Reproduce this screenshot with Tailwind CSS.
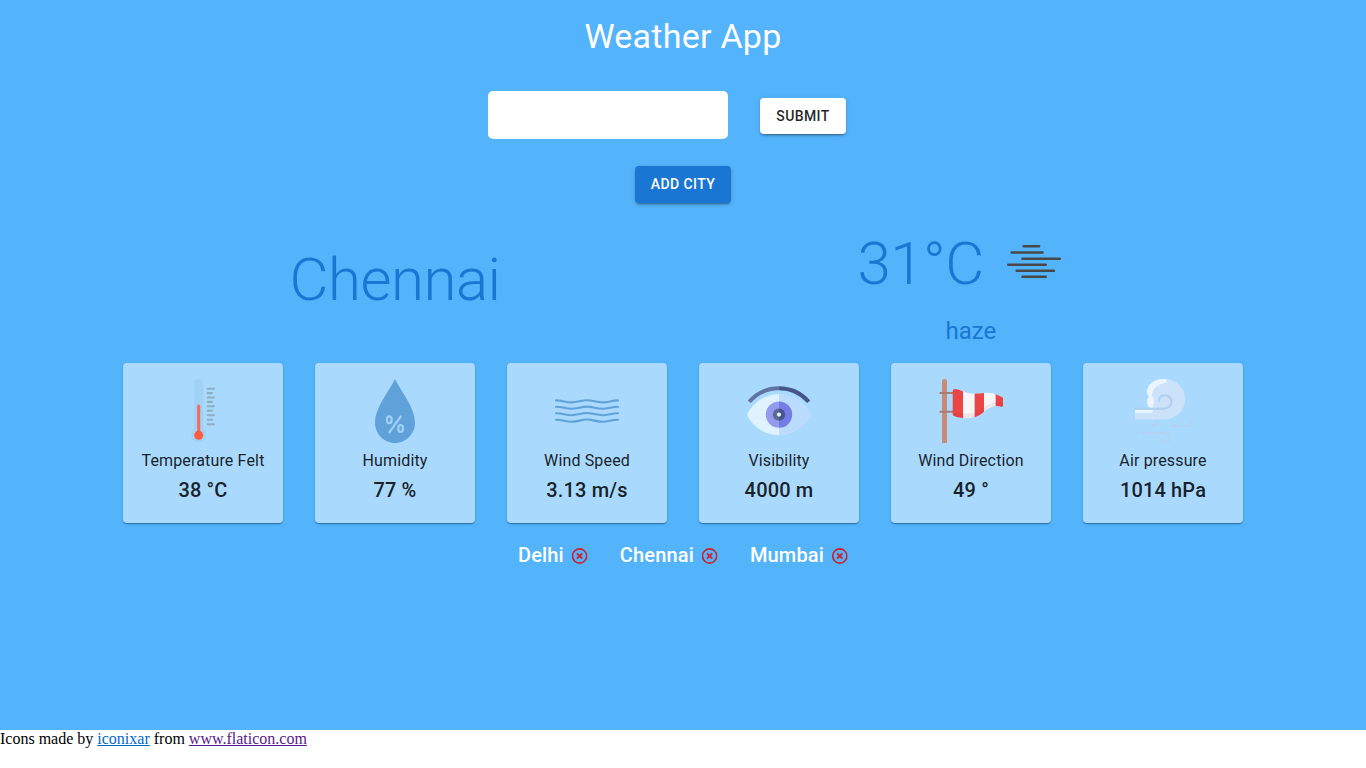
<!DOCTYPE html>
<html lang="en">
<head>
<meta charset="utf-8">
<title>Weather App</title>
<script src="https://cdn.jsdelivr.net/npm/@tailwindcss/browser@4"></script>
</head>
<body class="bg-white overflow-hidden">
<svg class="hidden">
  <symbol id="remove" viewBox="0 0 16 16">
    <circle cx="8" cy="8" r="7.1" fill="none" stroke="#cf1f2e" stroke-width="1.6"/>
    <path d="M5.3 5.3l5.4 5.4M10.7 5.3l-5.4 5.4" stroke="#cf1f2e" stroke-width="1.9"/>
  </symbol>
</svg>
<main class="h-[730px] bg-[#53b3fb] font-['Roboto',sans-serif] pt-[15px] text-[rgba(0,0,0,0.87)]">
  <h1 class="text-center text-white text-[34px] leading-[42px] tracking-[0.00735em]">Weather App</h1>
  <form class="mt-[34px] flex justify-center gap-8 pr-8">
    <input class="w-60 h-12 bg-white rounded-[5px] outline-none" type="text" aria-label="City">
    <button type="button" class="mt-[7px] h-9 px-4 bg-white rounded text-sm font-medium tracking-[0.02857em] shadow-[0_3px_1px_-2px_rgba(0,0,0,0.2),0_2px_2px_0_rgba(0,0,0,0.14),0_1px_5px_0_rgba(0,0,0,0.12)]">SUBMIT</button>
  </form>
  <div class="mt-[27px] flex justify-center">
    <button type="button" class="h-[37px] px-4 pb-[2px] bg-[#1976d2] text-white rounded text-sm font-medium tracking-[0.02857em] shadow-[0_3px_1px_-2px_rgba(0,0,0,0.2),0_2px_2px_0_rgba(0,0,0,0.14),0_1px_5px_0_rgba(0,0,0,0.12)]">ADD CITY</button>
  </div>
  <section class="mt-6 mx-auto w-[1152px] grid grid-cols-2 text-[#1976d2]">
    <h2 class="pt-[17px] text-center text-6xl leading-[72px] font-light tracking-[-0.00833em]">Chennai</h2>
    <div class="h-[120px]">
      <div class="flex pl-[174.5px] pt-px">
        <span class="w-[126px] whitespace-nowrap text-6xl leading-[72px] font-light tracking-[-0.00833em]">31°C</span>
        <svg class="ml-[14.5px]" width="72" height="72" viewBox="998 228 72 72" fill="none" stroke="#48484a" stroke-width="2.6" stroke-linecap="round"><path d="M1023.7 246.3h15.4M1011.7 252.5h30.8M1022.5 258.7h37.3M1008.3 264.7h37.5M1016.7 270.7h37.2M1022.5 276.7h23.3"/></svg>
      </div>
      <p class="mt-[15px] pl-[262.5px] text-2xl leading-8">haze</p>
    </div>
  </section>
  <section class="mt-4 flex justify-center gap-8 text-center">
    <article class="size-40 pt-4 rounded bg-[#a9d9fd] shadow-[0_2px_1px_-1px_rgba(0,0,0,0.2),0_1px_1px_0_rgba(0,0,0,0.14),0_1px_3px_0_rgba(0,0,0,0.12)]">
      <svg class="mx-auto size-16" viewBox="0 0 64 64">
        <path d="M23.2 4.5a4.5 4.5 0 0 1 9 0V50a7.5 7.5 0 1 1-9 0Z" fill="#a0d2f6"/>
        <path d="M27.7 27v27" stroke="#f3695d" stroke-width="3" stroke-linecap="round"/>
        <circle cx="27.7" cy="56.3" r="4.5" fill="#ff5b40"/>
        <path d="M36.7 9.7h6.3M36.7 18.5h6.3M36.7 27.3h6.3M36.7 36.3h6.3M36.7 45.2h6.3M36.7 14.1h4.3M36.7 22.9h4.3M36.7 31.8h4.3M36.7 40.7h4.3" stroke="#8eafbf" stroke-width="2.1" stroke-linecap="round"/>
      </svg>
      <p class="mt-[6px] leading-6 tracking-[0.00938em]">Temperature Felt</p>
      <p class="mt-px text-xl leading-8 font-medium tracking-[0.0075em]">38 °C</p>
    </article>
    <article class="size-40 pt-4 rounded bg-[#a9d9fd] shadow-[0_2px_1px_-1px_rgba(0,0,0,0.2),0_1px_1px_0_rgba(0,0,0,0.14),0_1px_3px_0_rgba(0,0,0,0.12)]">
      <svg class="mx-auto size-16" viewBox="0 0 64 64">
        <path d="M32 0C25 14 12 29 12 43.5C12 55 21 64 32 64s20-9 20-20.5C52 29 39 14 32 0Z" fill="#61a1d9"/>
        <g fill="none" stroke="#9fd2fb" stroke-width="2.2" stroke-linecap="round"><ellipse cx="26.3" cy="40.7" rx="2.4" ry="3.4"/><ellipse cx="37.6" cy="49.4" rx="2.4" ry="3.4"/><path d="M26.4 53.3L37.8 37.3"/></g>
      </svg>
      <p class="mt-[6px] leading-6 tracking-[0.00938em]">Humidity</p>
      <p class="mt-px text-xl leading-8 font-medium tracking-[0.0075em]">77 %</p>
    </article>
    <article class="size-40 pt-4 rounded bg-[#a9d9fd] shadow-[0_2px_1px_-1px_rgba(0,0,0,0.2),0_1px_1px_0_rgba(0,0,0,0.14),0_1px_3px_0_rgba(0,0,0,0.12)]">
      <svg class="mx-auto size-16" viewBox="0 0 64 64" fill="none" stroke="#61a1d9" stroke-width="2.1" stroke-linecap="round">
        <path d="M1 21.4C8 21.4 10 23.4 16.5 23.4S26 21.2 32 21.2S41 23.4 47.5 23.4S56 21.4 63 21.4"/>
        <path d="M1 27.8C8 27.8 10 29.8 16.5 29.8S26 27.6 32 27.6S41 29.8 47.5 29.8S56 27.8 63 27.8"/>
        <path d="M1 34.2C8 34.2 10 36.2 16.5 36.2S26 34 32 34S41 36.2 47.5 36.2S56 34.2 63 34.2"/>
        <path d="M1 40.7C8 40.7 10 42.8 16.5 42.8S26 40.5 32 40.5S41 42.8 47.5 42.8S56 40.7 63 40.7"/>
      </svg>
      <p class="mt-[6px] leading-6 tracking-[0.00938em]">Wind Speed</p>
      <p class="mt-px text-xl leading-8 font-medium tracking-[0.0075em]">3.13 m/s</p>
    </article>
    <article class="size-40 pt-4 rounded bg-[#a9d9fd] shadow-[0_2px_1px_-1px_rgba(0,0,0,0.2),0_1px_1px_0_rgba(0,0,0,0.14),0_1px_3px_0_rgba(0,0,0,0.12)]">
      <svg class="mx-auto size-16" viewBox="0 0 64 64">
        <path d="M32 15C19 15 6 23 0 35.7C6 48.5 19 56.3 32 56.3Z" fill="#dff2ff"/>
        <path d="M32 15C45 15 58 23 64 35.7C58 48.5 45 56.3 32 56.3Z" fill="#bbdcff"/>
        <path d="M32 22.4a13.2 13.2 0 0 0 0 26.4Z" fill="#939bed"/>
        <path d="M32 22.4a13.2 13.2 0 0 1 0 26.4Z" fill="#747de6"/>
        <path d="M32 29.4a6.2 6.2 0 0 0 0 12.4Z" fill="#596a96"/>
        <path d="M32 29.4a6.2 6.2 0 0 1 0 12.4Z" fill="#46568a"/>
        <circle cx="32" cy="35.6" r="2.1" fill="#e6f4ff"/>
        <path d="M2.300 22.800C10 14 20 9.300 32 9.300" fill="none" stroke="#6074a3" stroke-width="4"/>
        <path d="M61.700 22.800C54 14 44 9.300 32 9.300" fill="none" stroke="#465589" stroke-width="4"/>
      </svg>
      <p class="mt-[6px] leading-6 tracking-[0.00938em]">Visibility</p>
      <p class="mt-px text-xl leading-8 font-medium tracking-[0.0075em]">4000 m</p>
    </article>
    <article class="size-40 pt-4 rounded bg-[#a9d9fd] shadow-[0_2px_1px_-1px_rgba(0,0,0,0.2),0_1px_1px_0_rgba(0,0,0,0.14),0_1px_3px_0_rgba(0,0,0,0.12)]">
      <svg class="mx-auto size-16" viewBox="0 0 64 64">
        <path d="M3 64V2.5a2.5 2.5 0 0 1 5 0V64Z" fill="#c78b78"/>
        <path d="M.5 14H14M.5 32.7H14" stroke="#ac7c70" stroke-width="1.9"/>
        <path d="M13.7 12Q13.7 10 16 10Q20 10.3 24 12.5V39Q18 38.5 15 37Q13.7 36.5 13.7 35Z" fill="#ec4545"/>
        <path d="M24 12.5Q30 14.7 35.7 14.7V38.3Q30 39.5 24 39Z" fill="#f6f6f8"/>
        <path d="M35.7 14.7Q41 14.7 45 13.9V32.7Q41 36.5 35.7 38.3Z" fill="#ec4545"/>
        <path d="M45 13.9Q52 13 56.7 15.3V27Q50 28 45 32.7Z" fill="#f6f6f8"/>
        <path d="M56.7 15.3L63 18Q64 18.5 64 19.5V26.5Q64 28 62.7 27.7Q60 26.7 56.7 27Z" fill="#ec4545"/>
        <path d="M14 34Q35 37 44 29Q53 22 64 23.5V27.7Q50 25 45 32.7Q36 41 21 38.7Q14 37.5 14 34Z" fill="#b00020" fill-opacity=".07"/>
      </svg>
      <p class="mt-[6px] leading-6 tracking-[0.00938em]">Wind Direction</p>
      <p class="mt-px text-xl leading-8 font-medium tracking-[0.0075em]">49 °</p>
    </article>
    <article class="size-40 pt-4 rounded bg-[#a9d9fd] shadow-[0_2px_1px_-1px_rgba(0,0,0,0.2),0_1px_1px_0_rgba(0,0,0,0.14),0_1px_3px_0_rgba(0,0,0,0.12)]">
      <svg class="mx-auto size-16" viewBox="0 0 64 64">
        <path d="M4 30.5H19Q15 26 16 22.5Q16 19.5 18 17.5Q14.5 13.5 16.5 9.5C19 3 26 0 34 0A20.200 20.200 0 0 1 34 40.400H4Z" fill="#cbe2fa"/>
        <path d="M33 0C26 0 19 3 16.5 9.5Q14.5 13.5 18 17.5Q16 19.5 16 22.5Q16 26 19 28.7H21.5Q23.5 25 23 21.5Q22.5 18.5 21 16.8C21 10.5 25 7 31 4.8Q36 3.5 36 1.7Q36 0 33 0ZM4 31H22V32Q22 33.7 20.3 33.7H4Z" fill="#ebf5ff"/>
        <path d="M4 29.7H30.5C37.5 29.7 40.5 26.5 40.5 22.5A6.5 6.5 0 0 0 34 16.2Q28 16.2 28 22.5" fill="none" stroke="#accfef" stroke-width="1.9"/>
        <g fill="none" stroke="#b6cfef" stroke-width="1.3"><path d="M4 54h3M10.5 54H31Q39 54 39 59Q39 63 34.5 63Q30 63 29.5 59M20 46.5h3Q27 46.5 27 43.5Q27 41 24.5 41.5M40 47h9M52 47h4Q60.5 47 60.5 43.5Q60.5 40.5 57 41"/></g>
      </svg>
      <p class="mt-[6px] leading-6 tracking-[0.00938em]">Air pressure</p>
      <p class="mt-px text-xl leading-8 font-medium tracking-[0.0075em]">1014 hPa</p>
    </article>
  </section>
  <section class="mt-4 flex justify-center gap-8 text-white text-xl leading-8 font-medium tracking-[0.0075em]">
    <div class="flex items-center gap-2">Delhi<svg class="size-4 mt-px"><use href="#remove" x="-0.4"/></svg></div>
    <div class="flex items-center gap-2">Chennai<svg class="size-4 mt-px"><use href="#remove" x="-0.4"/></svg></div>
    <div class="flex items-center gap-2">Mumbai<svg class="size-4 mt-px"><use href="#remove" x="-0.2"/></svg></div>
  </section>
</main>
<footer class="font-['Liberation_Serif',serif] text-base leading-[18px] text-black">Icons made by <a href="#" class="text-[#0066cc] underline">iconixar</a> from <a href="#" class="text-[#551a8b] underline">www.flaticon.com</a></footer>
</body>
</html>
